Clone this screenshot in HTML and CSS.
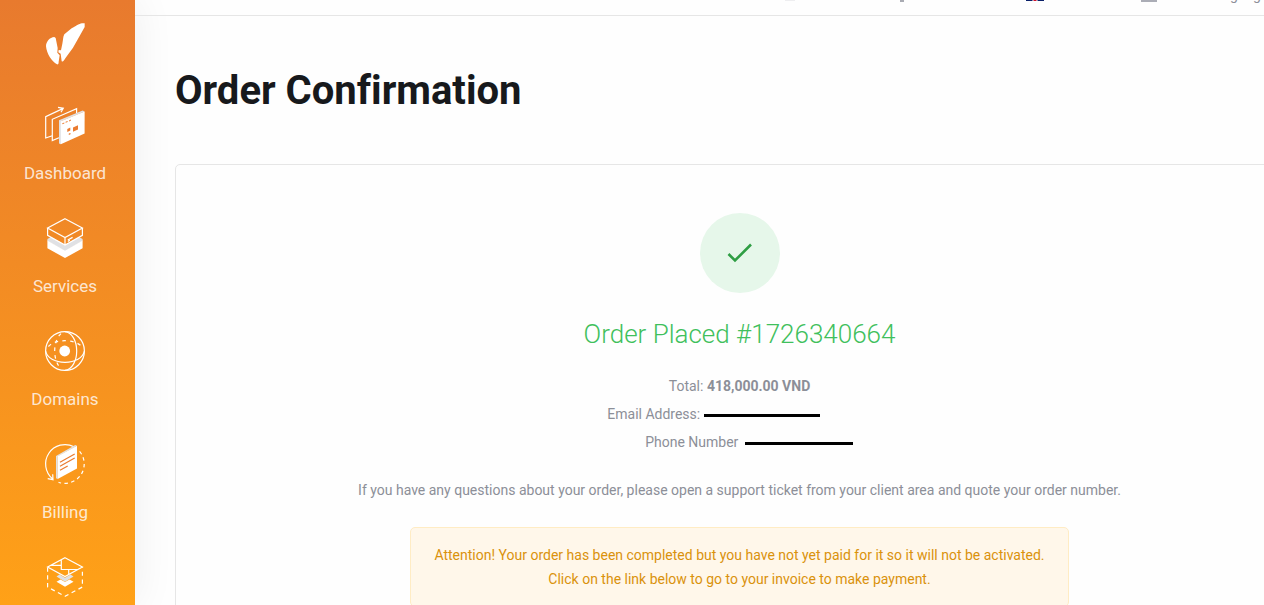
FILE: index.html
```html
<!DOCTYPE html>
<html lang="en">
<head>
    <meta charset="UTF-8">
    <meta name="viewport" content="width=device-width, initial-scale=1.0">
    <title>Order Confirmation</title>
    <link rel="stylesheet" href="styles.css">
</head>
<body>
    <div class="layout">
        <!-- Sidebar -->
        <nav class="sidebar">
            <a href="#" class="logo" aria-label="Home">
                <svg width="40" height="42" viewBox="0 0 120 126" fill="#fff">
                    <path d="M28 42 C14 43 3 56 3 70 C5 92 20 116 36 124 C40 125 41 121 41 116 L44 97 L37 89 L38 75 L32 45 Z"/>
                    <path d="M119 1 C108 -1 99 4 80 16 L58 34 C54 40 55 48 52 62 L48 82 L41 81 L40 88 L47 92 L50 115 C54 118 57 112 61 106 L84 74 L106 35 L119 12 Z"/>
                </svg>
            </a>
            <a href="#" class="nav-item">
                <svg class="nav-icon" viewBox="0 0 40 40">
                    <path class="line" d="M7.3 30.7 L.7 33 V11.7 L17.7 3.6 M13 2.3 L18.3 3.3 L16 7.2"/>
                    <path class="line" d="M14 32.7 L7.3 35.6 V14.3 L31.6 3.6 V8"/>
                    <path class="grey" d="M14 15.3 L37.7 5.6 L39.6 6.4 L16 16.3 V39.3 L14 38.4 Z"/>
                    <path class="white" d="M15.8 16.3 L39.6 6.4 V28.4 L15.8 39.3 Z"/>
                    <path class="mark" d="M17.3 18.2 l2 -.8 v1 l-2 .8 z M20.6 16.8 l2 -.8 v1 l-2 .8 z M24 15.4 l2 -.8 v1 l-2 .8 z M22.3 24 l3 -1.4 v3 l-3 1.3 z M28 22.4 l5 -2.2 v4.4 l-5 2.2 z M23.8 28.6 l1.7 -.7 v1.4 l-1.7 .7 z"/>
                </svg>
                <span>Dashboard</span>
            </a>
            <a href="#" class="nav-item">
                <svg class="nav-icon" viewBox="0 0 40 40">
                    <path class="grey" d="M2.4 21 L6 19 L20 27 L34 19 L37.6 21 V23 L20 33.5 L2.4 23 Z"/>
                    <path class="white" d="M2.4 22.6 L20 32.7 L37.6 22.6 V30.3 L20 40 L2.4 30.3 Z"/>
                    <path class="line" d="M20 .8 L37.4 10 L20 19.6 L2.6 10 Z M2.6 10 V17.4 L20 27 L37.4 17.4 V10 M20 19.6 V27 M22.8 22 L27.6 19.4 M22.8 23.5 L25 22.3"/>
                </svg>
                <span>Services</span>
            </a>
            <a href="#" class="nav-item">
                <svg class="nav-icon" viewBox="0 0 40 40">
                    <circle class="line" cx="20" cy="20" r="19.4"/>
                    <circle class="white" cx="19.7" cy="20" r="5.4"/>
                    <path class="line" d="M20 .6 C27 1.5 31.7 10 31.7 20 S27 38.5 20 39.4 M.6 20 C2 27 10 31.3 20 31.3 S38 27 39.4 20"/>
                    <path class="line" stroke-dasharray="3.5 4.2" d="M16 2.6 C7.6 10 7.6 30 16 37.6"/>
                    <path class="line" stroke-dasharray="3.5 4.2" d="M3.4 15.5 C10 7.8 30 7.8 36.6 15.5"/>
                </svg>
                <span>Domains</span>
            </a>
            <a href="#" class="nav-item">
                <svg class="nav-icon" viewBox="0 0 40 40">
                    <path class="line" d="M29 2.8 A19.4 19.4 0 0 0 7.6 34.9 M2.7 34.7 L8 35.7 L7.7 30.3"/>
                    <path class="line" stroke-dasharray="3.5 3.3" d="M34.6 7.4 A19.4 19.4 0 0 1 13.5 38.3"/>
                    <path class="grey" d="M11 12 L30.2 .9 L32 1.7 L12.7 12.5 V35 L11 34.3 Z"/>
                    <path class="white" d="M12.7 12.3 L32 1.7 V24.4 L12.7 35 Z"/>
                    <path class="mark-line" d="M15 18.3 L29.7 10 M15 22.3 L29.7 14 M15 26.3 L22.7 22"/>
                </svg>
                <span>Billing</span>
            </a>
            <a href="#" class="nav-item" aria-label="Support">
                <svg class="nav-icon" viewBox="0 0 40 40">
                    <path class="line" d="M20 .8 L37.4 10 L20 19.6 L2.6 10 Z M6 8.3 H16.3 M16.3 3 V12.5 H32.5 M23.7 12.5 V17.5"/>
                    <path class="line" stroke-dasharray="4.2 3.6" d="M2.6 10.5 V30 L20 39.4 L37.4 30 V10.5"/>
                    <path class="grey" d="M11.5 19.5 L14.5 17.6 L20 20.7 L25.5 17.6 L28.5 19.5 L20 24.8 Z"/>
                    <path class="white" d="M11.5 24.7 L15.5 22.4 L20 25 L24.5 22.4 L28.5 24.7 L20 29.7 Z"/>
                </svg>
            </a>
        </nav>

        <div class="content">
            <!-- Top bar -->
            <header class="topbar">
                <svg width="10" height="16" viewBox="0 0 10 16"><path d="M0 0 H10 V16 H0 Z" fill="#eeeef0"/></svg>
                <svg class="low" width="4" height="16" viewBox="0 0 4 16"><path d="M0 0 H4 V16 H0 Z" fill="#a9abb3"/></svg>
                <svg width="18" height="12" viewBox="0 0 18 12">
                    <path d="M0 0 H18 V12 H0 Z" fill="#0a2068"/>
                    <path d="M9 0 V12 M0 6 H18" stroke="#fff" stroke-width="5"/>
                    <path d="M9 0 V12 M0 6 H18" stroke="#d0122c" stroke-width="3"/>
                </svg>
                <svg class="low" width="16" height="12" viewBox="0 0 16 12"><path d="M0 0 H16 V12 H0 Z" fill="#abadb6"/></svg>
                <a href="#">Language</a>
            </header>

            <main class="main">
                <h1>Order Confirmation</h1>

                <section class="card">
                    <div class="check">
                        <svg width="26" height="20" viewBox="0 0 26 20"><path d="M1.5 11 L8 17.5 L24 1.5" fill="none" stroke="#2f9e44" stroke-width="2.6"/></svg>
                    </div>
                    <h2>Order Placed #1726340664</h2>
                    <p class="row">Total: <strong>418,000.00 VND</strong></p>
                    <p class="row">Email Address: <span class="hidden-value email"></span></p>
                    <p class="row">Phone Number <span class="hidden-value phone"></span></p>
                    <p class="note">If you have any questions about your order, please open a support ticket from your client area and quote your order number.</p>
                    <div class="alert">
                        Attention! Your order has been completed but you have not yet paid for it so it will not be activated.<br>
                        Click on the link below to go to your invoice to make payment.
                    </div>
                </section>
            </main>
        </div>
    </div>
</body>
</html>
```

FILE: styles.css
```css
* {
    margin: 0;
    padding: 0;
    box-sizing: border-box;
}

body {
    font-family: Roboto, Arial, sans-serif;
    font-size: 14px;
    line-height: 24px;
    font-variant-ligatures: none;
    color: #8c8f98;
    background: #fefefe;
}

a {
    color: inherit;
    text-decoration: none;
}

.layout {
    display: flex;
    height: 100vh;
    overflow: hidden;
}

/* Sidebar */
.sidebar {
    flex: 0 0 135px;
    display: flex;
    flex-direction: column;
    align-items: center;
    padding: 23px 5px 0 0;
    background: linear-gradient(#e87a2e, #ffa117);
    box-shadow: 0 0 40px rgba(0, 0, 0, 0.07);
}

.logo {
    height: 42px;
    margin-bottom: 40px;
}

.logo svg {
    display: block;
}

.nav-item {
    display: flex;
    flex-direction: column;
    align-items: center;
    gap: 16px;
    margin-bottom: 33px;
    font-size: 17px;
    color: rgba(255, 255, 255, 0.8);
}

.nav-icon {
    width: 40px;
    height: 40px;
    overflow: visible;
}

.line {
    fill: none;
    stroke: #fff;
    stroke-width: 1.2;
}

.white {
    fill: #fff;
}

.grey {
    fill: #e0e1e4;
}

.mark {
    fill: #ea7b30;
}

.mark-line {
    fill: none;
    stroke: #ea7b30;
    stroke-width: 1.2;
}

/* Top bar */
.content {
    flex: 1;
    min-width: 0;
    overflow: hidden;
}

.topbar {
    display: grid;
    grid-template-columns: 115px 126px 115px 66px 57px;
    justify-content: end;
    align-content: end;
    align-items: end;
    height: 16px;
    padding-bottom: 14px;
    border-bottom: 1px solid #e6e6e6;
    overflow: hidden;
}

.topbar .low {
    margin-bottom: -1px;
}

.topbar a {
    line-height: 16px;
    margin-bottom: -2px;
}

/* Order */
.main {
    padding: 51px 0 0 40px;
}

h1 {
    margin-bottom: 49px;
    font-size: 40px;
    line-height: 48px;
    font-weight: 700;
    color: #17191c;
}

.card {
    display: flex;
    flex-direction: column;
    align-items: center;
    margin-right: -40px;
    padding: 48px;
    border: 1px solid #e6e6e6;
    border-radius: 5px;
    text-align: center;
}

.check {
    display: flex;
    align-items: center;
    justify-content: center;
    width: 80px;
    height: 80px;
    margin-bottom: 25px;
    border-radius: 50%;
    background: #e6f7ea;
}

h2 {
    margin-bottom: 24px;
    font-size: 26px;
    line-height: 32px;
    font-weight: 300;
    color: #40c05c;
}

.row {
    margin-bottom: 4px;
}

.hidden-value {
    display: inline-block;
    height: 3px;
    background: #000;
    vertical-align: middle;
}

.email {
    width: 116px;
    margin-right: 52px;
}

.phone {
    width: 108px;
    margin: 0 -19px 0 3px;
}

.note {
    margin: 20px 0 25px;
}

.alert {
    padding: 15px 23px;
    border: 1px solid #ffecc4;
    border-radius: 5px;
    background: #fff7ea;
    color: #da920c;
}
```
